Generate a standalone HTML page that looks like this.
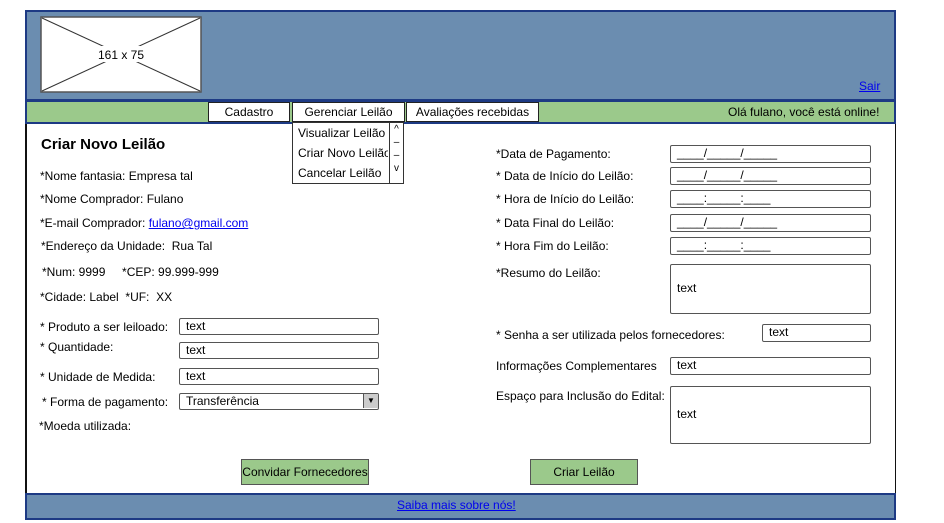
<!DOCTYPE html><html><head><meta charset="utf-8"><style>
body{margin:0;width:944px;height:523px;background:#fff;font-family:"Liberation Sans",sans-serif;font-size:12px;color:#000;position:relative;overflow:hidden}
.a{position:absolute;white-space:nowrap}
.box{position:absolute;border:1.5px solid #555;border-radius:2px;background:#fff;box-sizing:border-box;padding-left:6px;line-height:15px}
.btn{position:absolute;background:#9bc98b;border:1px solid #555;box-sizing:border-box;text-align:center}
.tab{position:absolute;top:102px;height:20px;background:#fff;border:1px solid #222;box-sizing:border-box;text-align:center;line-height:18px}
</style></head><body>
<div class="a" style="left:25px;top:10px;width:867px;height:89px;background:#6b8db0;border:2px solid #1d3a84;border-bottom:none"></div>
<div class="a" style="left:25px;top:99px;width:871px;height:3px;background:#1d3a84"></div>
<div class="a" style="left:25px;top:102px;width:867px;height:20px;background:#9bc98b;border:2px solid #1d3a84;border-top:none"></div>
<div class="a" style="left:25px;top:124px;width:868px;height:369px;border-left:2px solid #111;border-right:1px solid #111"></div>
<div class="a" style="left:25px;top:493px;width:867px;height:23px;background:#6b8db0;border:2px solid #1d3a84"></div>
<svg class="a" style="left:40px;top:16px" width="162" height="77"><rect x="1" y="1" width="160" height="75" fill="#fff" stroke="#555" stroke-width="1.5"/><line x1="2" y1="2" x2="160" y2="75" stroke="#333"/><line x1="160" y1="2" x2="2" y2="75" stroke="#333"/><rect x="55" y="30" width="52" height="16" fill="#fff"/><text x="81" y="43" text-anchor="middle" font-size="12" font-family="Liberation Sans">161 x 75</text></svg>
<a class="a" style="left:859px;top:79px;color:#00e;text-decoration:underline">Sair</a>
<div class="tab" style="left:208px;width:82px">Cadastro</div>
<div class="tab" style="left:292px;width:113px">Gerenciar Leilão</div>
<div class="tab" style="left:406px;width:133px">Avaliações recebidas</div>
<div class="a" style="left:728px;top:105px">Olá fulano, você está online!</div>
<div class="a" style="left:292px;top:122px;width:112px;height:62px;border:1px solid #333;background:#fff;box-sizing:border-box"></div>
<div class="a" style="left:389px;top:122px;width:15px;height:62px;border:1px solid #333;box-sizing:border-box;font-size:10px;text-align:center;line-height:13px">^<br>–<br>–<br>v</div>
<div class="a" style="left:298px;top:126px">Visualizar Leilão</div>
<div class="a" style="left:298px;top:146px;width:90px;overflow:hidden">Criar Novo Leilão</div>
<div class="a" style="left:298px;top:166px">Cancelar Leilão</div>
<div class="a" style="left:41px;top:136px;font-weight:bold;font-size:15px">Criar Novo Leilão</div>
<div class="a" style="left:40px;top:169px">*Nome fantasia: Empresa tal</div>
<div class="a" style="left:40px;top:192px">*Nome Comprador: Fulano</div>
<div class="a" style="left:40px;top:216px">*E-mail Comprador: <span style="color:#00e;text-decoration:underline">fulano@gmail.com</span></div>
<div class="a" style="left:41px;top:239px">*Endereço da Unidade: &nbsp;Rua Tal</div>
<div class="a" style="left:42px;top:265px">*Num: 9999 &nbsp;&nbsp;&nbsp;&nbsp;*CEP: 99.999-999</div>
<div class="a" style="left:40px;top:290px">*Cidade: Label &nbsp;*UF: &nbsp;XX</div>
<div class="a" style="left:40px;top:320px">* Produto a ser leiloado:</div>
<div class="a" style="left:40px;top:340px">* Quantidade:</div>
<div class="a" style="left:40px;top:370px">* Unidade de Medida:</div>
<div class="a" style="left:42px;top:395px">* Forma de pagamento:</div>
<div class="a" style="left:39px;top:419px">*Moeda utilizada:</div>
<div class="box" style="left:179px;top:318px;width:200px;height:17px;line-height:14px">text</div>
<div class="box" style="left:179px;top:342px;width:200px;height:17px;line-height:14px">text</div>
<div class="box" style="left:179px;top:368px;width:200px;height:17px;line-height:14px">text</div>
<div class="box" style="left:179px;top:393px;width:200px;height:17px;line-height:14px">Transferência<span style="position:absolute;right:0;top:0;width:14px;height:14px;background:#ccc;border-left:1px solid #555;font-size:8px;text-align:center">▼</span></div>
<div class="btn" style="left:241px;top:459px;width:128px;height:26px;line-height:24px">Convidar Fornecedores</div>
<div class="btn" style="left:530px;top:459px;width:108px;height:26px;line-height:24px">Criar Leilão</div>
<div class="a" style="left:496px;top:147px">*Data de Pagamento:</div>
<div class="a" style="left:496px;top:169px">* Data de Início do Leilão:</div>
<div class="a" style="left:496px;top:192px">* Hora de Início do Leilão:</div>
<div class="a" style="left:496px;top:216px">* Data Final do Leilão:</div>
<div class="a" style="left:496px;top:239px">* Hora Fim do Leilão:</div>
<div class="a" style="left:496px;top:266px">*Resumo do Leilão:</div>
<div class="a" style="left:496px;top:328px">* Senha a ser utilizada pelos fornecedores:</div>
<div class="a" style="left:496px;top:359px">Informações Complementares</div>
<div class="a" style="left:496px;top:389px">Espaço para Inclusão do Edital:</div>
<div class="box" style="left:670px;top:145px;width:201px;height:18px">____/_____/_____</div>
<div class="box" style="left:670px;top:167px;width:201px;height:18px">____/_____/_____</div>
<div class="box" style="left:670px;top:190px;width:201px;height:18px">____:_____:____</div>
<div class="box" style="left:670px;top:214px;width:201px;height:18px">____/_____/_____</div>
<div class="box" style="left:670px;top:237px;width:201px;height:18px">____:_____:____</div>
<div class="box" style="left:670px;top:264px;width:201px;height:50px;line-height:47px">text</div>
<div class="box" style="left:762px;top:324px;width:109px;height:18px">text</div>
<div class="box" style="left:670px;top:357px;width:201px;height:18px">text</div>
<div class="box" style="left:670px;top:386px;width:201px;height:58px;line-height:55px">text</div>
<a class="a" style="left:397px;top:498px;color:#00e;text-decoration:underline">Saiba mais sobre nós!</a>
</body></html>
